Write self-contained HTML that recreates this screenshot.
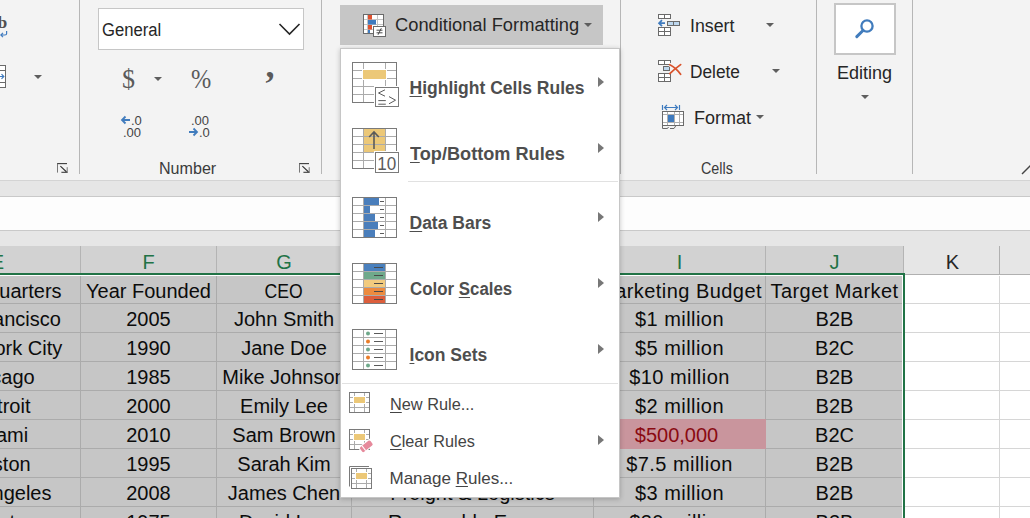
<!DOCTYPE html>
<html>
<head>
<meta charset="utf-8">
<style>
html,body{margin:0;padding:0;}
body{width:1030px;height:518px;overflow:hidden;position:relative;background:#f3f3f3;font-family:"Liberation Sans",sans-serif;color:#262626;}
.abs{position:absolute;}
.t{position:absolute;white-space:pre;line-height:1;transform-origin:0 0;}
/* ribbon */
#ribbon{left:0;top:0;width:1030px;height:180px;background:#f3f3f3;}
.vsep{position:absolute;top:0;width:1px;height:174px;background:#b6b6b6;}
.grp{font-size:16.5px;color:#3b3b3b;}
.rb{font-size:18px;color:#262626;}
.dd{position:absolute;width:0;height:0;border-left:4px solid transparent;border-right:4px solid transparent;border-top:4px solid #5e5e5e;}
/* bands */
#band1{left:0;top:180px;width:1030px;height:16px;background:#e6e6e6;border-top:1px solid #d4d4d4;box-sizing:border-box;}
#fbar{left:0;top:196px;width:1030px;height:35px;background:#fdfdfd;border-top:1px solid #c9c9c9;border-bottom:1px solid #c9c9c9;box-sizing:border-box;}
#band2{left:0;top:231px;width:1030px;height:15px;background:#e6e6e6;}
/* grid */
#grid{left:0;top:246px;width:1030px;height:272px;background:#fff;z-index:0;overflow:hidden;}
.ch{position:absolute;top:0;height:27px;background:#d2d2d2;color:#217346;font-size:20px;text-align:center;line-height:32px;border-right:1px solid #b4b4b4;box-sizing:border-box;}
.ch.u{background:#e6e6e6;color:#262626;border-right:1px solid #b0b0b0;border-bottom:1px solid #b0b0b0;}
.c{position:absolute;height:29px;background:#c6c6c6;border-right:1px solid #ababab;border-bottom:1px solid #ababab;box-sizing:border-box;font-size:20px;line-height:31px;text-align:center;color:#0c0c0c;white-space:pre;overflow:hidden;}
.c.w{background:#fff;border-color:#d6d6d6;}
/* menu */
#menu{z-index:5;left:340px;top:48px;width:280px;height:450px;background:#fff;border:1px solid #c6c6c6;box-sizing:border-box;box-shadow:0 1px 5px rgba(0,0,0,0.22);}
.mi{font-size:17.5px;font-weight:bold;color:#4e4e4e;white-space:pre;line-height:1;}
.ms{font-size:17px;color:#444;white-space:pre;line-height:1;}
.arr{position:absolute;width:0;height:0;border-top:5px solid transparent;border-bottom:5px solid transparent;border-left:6px solid #777;}
.hr{position:absolute;height:1px;background:#e1e1e1;}
u{text-decoration:underline;text-underline-offset:2px;text-decoration-thickness:1px;}
</style>
</head>
<body>
<div id="ribbon" class="abs">
  <div class="vsep" style="left:79px"></div>
  <div class="vsep" style="left:321px"></div>
  <div class="vsep" style="left:620px"></div>
  <div class="vsep" style="left:816px"></div>
  <div class="vsep" style="left:912px"></div>
  <!-- number group -->
  <div class="abs" style="left:98px;top:8px;width:206px;height:42px;box-sizing:border-box;border:1px solid #c6c6c6;background:#fff;"></div>
  <div class="t rb" id="tGeneral" style="left:101.5px;top:21px;font-size:18px;transform:scaleX(0.925);">General</div>
  <svg class="abs" style="left:278px;top:20px" width="24" height="18"><path d="M1.5 4 L11.5 14 L21.5 4" fill="none" stroke="#262626" stroke-width="1.6"/></svg>
  <div class="t" id="tDollar" style="left:121.5px;top:65px;font-size:28px;transform:scaleX(0.93);color:#5a5a5a;font-family:'Liberation Serif',serif;">$</div>
  <div class="dd" style="left:154px;top:77px"></div>
  <div class="t" id="tPct" style="left:191px;top:66px;font-size:27px;color:#5a5a5a;font-family:'Liberation Serif',serif;transform:scaleX(0.9);">%</div>
  <div class="t" id="tComma" style="left:265.5px;top:47px;font-size:36px;font-weight:bold;color:#5a5a5a;font-family:'Liberation Serif',serif;">,</div>
  <div class="t" id="tDec1a" style="left:131px;top:114px;font-size:13px;color:#444;">.0</div>
  <div class="t" id="tDec1b" style="left:123px;top:126px;font-size:13px;color:#444;">.00</div>
  <div class="t" id="tDec2a" style="left:191px;top:114px;font-size:13px;color:#444;">.00</div>
  <div class="t" id="tDec2b" style="left:199px;top:126px;font-size:13px;color:#444;">.0</div>
  <svg class="abs" style="left:120px;top:115px" width="12" height="10"><path d="M10 5 H2 M5.5 1.5 L2 5 L5.5 8.5" fill="none" stroke="#417cbd" stroke-width="1.8"/></svg>
  <svg class="abs" style="left:188px;top:127px" width="12" height="10"><path d="M1 5 H9 M5.5 1.5 L9 5 L5.5 8.5" fill="none" stroke="#417cbd" stroke-width="1.8"/></svg>
  <div class="t grp" id="tNumber" style="left:159px;top:160px;transform:scaleX(0.975);">Number</div>
  <!-- launchers -->
  <svg class="abs" style="left:56.7px;top:163px" width="12" height="12"><path d="M0 0.6 H10" stroke="#3a3a3a" stroke-width="1.1"/><path d="M0.5 0.6 V9.6" stroke="#777" stroke-width="1"/><path d="M3.4 3.2 L9.6 9.0" stroke="#2e2e2e" stroke-width="1.1"/><path d="M4.4 9.3 H10.6" stroke="#3a3a3a" stroke-width="1.1"/><path d="M10.2 4.2 V9.6" stroke="#777" stroke-width="1"/></svg>
  <svg class="abs" style="left:298.7px;top:163px" width="12" height="12"><path d="M0 0.6 H10" stroke="#3a3a3a" stroke-width="1.1"/><path d="M0.5 0.6 V9.6" stroke="#777" stroke-width="1"/><path d="M3.4 3.2 L9.6 9.0" stroke="#2e2e2e" stroke-width="1.1"/><path d="M4.4 9.3 H10.6" stroke="#3a3a3a" stroke-width="1.1"/><path d="M10.2 4.2 V9.6" stroke="#777" stroke-width="1"/></svg>
  <!-- left partial group -->
  <div class="t" id="tb" style="left:-2.5px;top:14px;font-size:17.5px;font-weight:bold;color:#505050;font-family:'Liberation Serif',serif;">b</div>
  <div class="dd" style="left:34px;top:75px"></div>
  <!-- conditional formatting button -->
  <div class="abs" style="left:340px;top:5px;width:263px;height:40px;background:#c6c6c6;"></div>
  <div class="t rb" id="tCF" style="left:395px;top:16px;font-size:18px;transform:scaleX(1.017);">Conditional Formatting</div>
  <div class="dd" style="left:584px;top:23px;border-left-width:4px;border-right-width:4px;border-top-width:4px;"></div>
<svg class="abs" style="left:360px;top:10px" width="30" height="30" viewBox="360 10 30 30">
<rect x="363.5" y="14.5" width="20" height="19" fill="#fff"/>
<path d="M364 19.5 H383 M364 24.5 H383 M364 29.5 H383 M367.5 15 V33 M377.5 15 V33" stroke="#c4c4c4" stroke-width="1" fill="none"/>
<rect x="368" y="15" width="4" height="4.5" fill="#e0512f"/><rect x="368" y="20" width="8" height="4.5" fill="#3f7bbf"/><rect x="368" y="25" width="4" height="4.5" fill="#e0512f"/><rect x="368" y="30" width="2" height="3" fill="#3f7bbf"/>
<rect x="363.5" y="14.5" width="20" height="19" fill="none" stroke="#6a6a6a"/>
<rect x="373.5" y="26.5" width="12" height="10" fill="#fff" stroke="#6a6a6a"/>
<path d="M376.5 30.2 H382.5 M376.5 32.8 H382.5 M381.3 28.2 L378 34.8" stroke="#3a3a3a" stroke-width="0.9" fill="none"/>
</svg>
<svg class="abs" style="left:655px;top:10px" width="30" height="30" viewBox="655 10 30 30">
<rect x="658.5" y="14.5" width="12" height="4" fill="#fff" stroke="#6a6a6a"/><path d="M664.5 14.5 V18.5" stroke="#6a6a6a"/>
<rect x="667.5" y="21.5" width="12" height="4" fill="#bdd7ee" stroke="#6a6a6a"/><path d="M673.5 21.5 V25.5" stroke="#6a6a6a"/>
<rect x="658.5" y="27.5" width="12" height="8" fill="#fff" stroke="#6a6a6a"/><path d="M664.5 27.5 V35.5 M658.5 31.5 H670.5" stroke="#6a6a6a"/>
<path d="M665 23.2 H659.2 M662 20.2 L659 23.2 L662 26.2" fill="none" stroke="#3f7bbf" stroke-width="1.7"/>
</svg>
<svg class="abs" style="left:655px;top:56px" width="30" height="30" viewBox="655 56 30 30">
<rect x="658.5" y="60.5" width="12" height="4" fill="#fff" stroke="#6a6a6a"/><path d="M664.5 60.5 V64.5" stroke="#6a6a6a"/>
<rect x="663.5" y="66.5" width="6" height="4" fill="#bdd7ee" stroke="#6a6a6a"/>
<rect x="658.5" y="73.5" width="12" height="8" fill="#fff" stroke="#6a6a6a"/><path d="M664.5 73.5 V81.5 M658.5 77.5 H670.5" stroke="#6a6a6a"/>
<path d="M669.5 64.5 Q675 67 680.5 74.5" stroke="#f3f3f3" stroke-width="4" fill="none"/>
<path d="M669.8 64.8 Q675.5 67.5 680.6 74.3" stroke="#d9532c" stroke-width="1.8" fill="none" stroke-linecap="round"/>
<path d="M669.8 73.6 Q674 69.5 680.6 64.6" stroke="#d9532c" stroke-width="1.8" fill="none" stroke-linecap="round"/>
</svg>
<svg class="abs" style="left:658px;top:102px" width="30" height="30" viewBox="658 102 30 30">
<path d="M662.5 105 V110 M679.5 105 V110 M664.5 107.5 H677.5 M667 105 L664.5 107.5 L667 110 M675 105 L677.5 107.5 L675 110" stroke="#3f7bbf" stroke-width="1.2" fill="none"/>
<rect x="662.5" y="111.5" width="21" height="14" fill="#fff"/>
<path d="M667.5 112 V125 M674.5 112 V125 M679.5 112 V125 M663 114.5 H683 M663 122.5 H683" stroke="#b0b0b0" fill="none"/>
<rect x="668" y="115" width="6" height="7" fill="#3f7bbf"/>
<path d="M662.5 125.5 V128.5 H667.5 L668.5 127 M670 128.5 H674 L676 125.5" stroke="#6a6a6a" fill="none"/>
<rect x="662.5" y="111.5" width="21" height="14" fill="none" stroke="#6a6a6a"/>
</svg>
<svg class="abs" style="left:0px;top:28px" width="12" height="62" viewBox="0 28 12 62">
<path d="M6.6 31 V33.8 Q6.6 35 5 35 H1 M3 32.8 L0.8 35 L3 37.2" stroke="#3f7bbf" stroke-width="1.2" fill="none"/>
<rect x="-4.5" y="65.5" width="10" height="22" fill="#fff" stroke="#6a6a6a"/>
<path d="M-4 70.5 H5 M-4 82.5 H5" stroke="#6a6a6a" fill="none"/>
<path d="M-2 76.5 H3.5 M1.5 74.2 L3.8 76.5 L1.5 78.8" stroke="#3f7bbf" stroke-width="1.2" fill="none"/>
</svg>
  <!-- cells group -->
  <div class="t rb" id="tInsert" style="left:690px;top:17px;transform:scaleX(0.985);">Insert</div>
  <div class="dd" style="left:765.5px;top:23px"></div>
  <div class="t rb" id="tDelete" style="left:690px;top:63px;transform:scaleX(0.96);">Delete</div>
  <div class="dd" style="left:771.5px;top:69px"></div>
  <div class="t rb" id="tFormat" style="left:694px;top:108.7px;">Format</div>
  <div class="dd" style="left:756px;top:115px"></div>
  <div class="t grp" id="tCells" style="left:701px;top:160px;transform:scaleX(0.87);">Cells</div>
  <!-- editing -->
  <div class="abs" style="left:834px;top:3px;width:62px;height:52px;box-sizing:border-box;border:2px solid #c6c6c6;background:#fff;"></div>
  <svg class="abs" style="left:853px;top:17px" width="24" height="24"><circle cx="14" cy="9" r="5.6" fill="none" stroke="#417cbd" stroke-width="2.3"/><path d="M10 13.5 L3.8 19.6" stroke="#417cbd" stroke-width="3" stroke-linecap="round"/></svg>
  <div class="t rb" id="tEditing" style="left:837px;top:64px;">Editing</div>
  <div class="dd" style="left:861px;top:94.5px"></div>
  <svg class="abs" style="left:1020px;top:163px" width="12" height="14"><path d="M2 11 L12 1" fill="none" stroke="#444" stroke-width="1.4"/></svg>
</div>
<div id="band1" class="abs"></div>
<div id="fbar" class="abs"></div>
<div id="band2" class="abs"></div>
<div id="grid" class="abs">
<div class="ch" style="left:-80px;width:161px;height:27px;padding-right:5px;">E</div>
<div class="c" style="left:-80px;top:30px;width:161px;height:28px;"><span style="position:relative;left:1px">Headquarters</span></div>
<div class="c" style="left:-80px;top:58px;width:161px;height:29px;"><span style="position:relative;left:-3px">San Francisco</span></div>
<div class="c" style="left:-80px;top:87px;width:161px;height:29px;"><span style="position:relative;left:0px">New York City</span></div>
<div class="c" style="left:-80px;top:116px;width:161px;height:29px;"><span style="position:relative;left:-2px">Chicago</span></div>
<div class="c" style="left:-80px;top:145px;width:161px;height:29px;"><span style="position:relative;left:1px">Detroit</span></div>
<div class="c" style="left:-80px;top:174px;width:161px;height:29px;"><span style="position:relative;left:1.5px">Miami</span></div>
<div class="c" style="left:-80px;top:203px;width:161px;height:29px;"><span style="position:relative;left:-0.5px">Boston</span></div>
<div class="c" style="left:-80px;top:232px;width:161px;height:29px;"><span style="position:relative;left:-3px">Los Angeles</span></div>
<div class="c" style="left:-80px;top:261px;width:161px;height:29px;"><span style="position:relative;left:0px">Houston</span></div>
<div class="ch" style="left:81px;width:136px;height:27px;">F</div>
<div class="c" style="left:81px;top:30px;width:136px;height:28px;">Year Founded</div>
<div class="c" style="left:81px;top:58px;width:136px;height:29px;">2005</div>
<div class="c" style="left:81px;top:87px;width:136px;height:29px;">1990</div>
<div class="c" style="left:81px;top:116px;width:136px;height:29px;">1985</div>
<div class="c" style="left:81px;top:145px;width:136px;height:29px;">2000</div>
<div class="c" style="left:81px;top:174px;width:136px;height:29px;">2010</div>
<div class="c" style="left:81px;top:203px;width:136px;height:29px;">1995</div>
<div class="c" style="left:81px;top:232px;width:136px;height:29px;">2008</div>
<div class="c" style="left:81px;top:261px;width:136px;height:29px;">1975</div>
<div class="ch" style="left:217px;width:135px;height:27px;">G</div>
<div class="c" style="left:217px;top:30px;width:135px;height:28px;"><span style="display:inline-block;transform:scaleX(0.88)">CEO</span></div>
<div class="c" style="left:217px;top:58px;width:135px;height:29px;">John Smith</div>
<div class="c" style="left:217px;top:87px;width:135px;height:29px;">Jane Doe</div>
<div class="c" style="left:217px;top:116px;width:135px;height:29px;">Mike Johnson</div>
<div class="c" style="left:217px;top:145px;width:135px;height:29px;">Emily Lee</div>
<div class="c" style="left:217px;top:174px;width:135px;height:29px;">Sam Brown</div>
<div class="c" style="left:217px;top:203px;width:135px;height:29px;">Sarah Kim</div>
<div class="c" style="left:217px;top:232px;width:135px;height:29px;">James Chen</div>
<div class="c" style="left:217px;top:261px;width:135px;height:29px;">David Lee</div>
<div class="ch" style="left:352px;width:242px;height:27px;">H</div>
<div class="c" style="left:352px;top:30px;width:242px;height:28px;">Industry</div>
<div class="c" style="left:352px;top:58px;width:242px;height:29px;">Software</div>
<div class="c" style="left:352px;top:87px;width:242px;height:29px;">Finance</div>
<div class="c" style="left:352px;top:116px;width:242px;height:29px;">Manufacturing</div>
<div class="c" style="left:352px;top:145px;width:242px;height:29px;">Automotive</div>
<div class="c" style="left:352px;top:174px;width:242px;height:29px;">Hospitality</div>
<div class="c" style="left:352px;top:203px;width:242px;height:29px;">Healthcare</div>
<div class="c" style="left:352px;top:232px;width:242px;height:29px;">Freight &amp; Logistics</div>
<div class="c" style="left:352px;top:261px;width:242px;height:29px;">Renewable Energy</div>
<div class="ch" style="left:594px;width:172px;height:27px;">I</div>
<div class="c" style="left:594px;top:30px;width:172px;height:28px;letter-spacing:0.45px;"><span style="position:relative;left:0.5px">Marketing Budget</span></div>
<div class="c" style="left:594px;top:58px;width:172px;height:29px;letter-spacing:0.45px;">$1 million</div>
<div class="c" style="left:594px;top:87px;width:172px;height:29px;letter-spacing:0.45px;">$5 million</div>
<div class="c" style="left:594px;top:116px;width:172px;height:29px;letter-spacing:0.45px;">$10 million</div>
<div class="c" style="left:594px;top:145px;width:172px;height:29px;letter-spacing:0.45px;">$2 million</div>
<div class="c" style="left:594px;top:174px;width:172px;height:29px;background:#c9959d;color:#8a0a12;border-color:#c9959d;margin-top:-1px;height:30px;line-height:33px;z-index:2;"><span style="position:relative;left:-3px">$500,000</span></div>
<div class="c" style="left:594px;top:203px;width:172px;height:29px;letter-spacing:0.45px;">$7.5 million</div>
<div class="c" style="left:594px;top:232px;width:172px;height:29px;letter-spacing:0.45px;">$3 million</div>
<div class="c" style="left:594px;top:261px;width:172px;height:29px;letter-spacing:0.45px;">$20 million</div>
<div class="ch" style="left:766px;width:138px;height:27px;">J</div>
<div class="c" style="left:766px;top:30px;width:138px;height:28px;letter-spacing:0.45px;">Target Market</div>
<div class="c" style="left:766px;top:58px;width:138px;height:29px;">B2B</div>
<div class="c" style="left:766px;top:87px;width:138px;height:29px;">B2C</div>
<div class="c" style="left:766px;top:116px;width:138px;height:29px;">B2B</div>
<div class="c" style="left:766px;top:145px;width:138px;height:29px;">B2B</div>
<div class="c" style="left:766px;top:174px;width:138px;height:29px;">B2C</div>
<div class="c" style="left:766px;top:203px;width:138px;height:29px;">B2B</div>
<div class="c" style="left:766px;top:232px;width:138px;height:29px;">B2B</div>
<div class="c" style="left:766px;top:261px;width:138px;height:29px;">B2B</div>
<div class="ch u" style="left:904px;width:96px;height:29px;padding-left:2px;">K</div>
<div class="c w" style="left:904px;top:30px;width:96px;height:28px;"></div>
<div class="c w" style="left:904px;top:58px;width:96px;height:29px;"></div>
<div class="c w" style="left:904px;top:87px;width:96px;height:29px;"></div>
<div class="c w" style="left:904px;top:116px;width:96px;height:29px;"></div>
<div class="c w" style="left:904px;top:145px;width:96px;height:29px;"></div>
<div class="c w" style="left:904px;top:174px;width:96px;height:29px;"></div>
<div class="c w" style="left:904px;top:203px;width:96px;height:29px;"></div>
<div class="c w" style="left:904px;top:232px;width:96px;height:29px;"></div>
<div class="c w" style="left:904px;top:261px;width:96px;height:29px;"></div>
<div class="ch u" style="left:1000px;width:41px;height:29px;"></div>
<div class="c w" style="left:1000px;top:30px;width:41px;height:28px;"></div>
<div class="c w" style="left:1000px;top:58px;width:41px;height:29px;"></div>
<div class="c w" style="left:1000px;top:87px;width:41px;height:29px;"></div>
<div class="c w" style="left:1000px;top:116px;width:41px;height:29px;"></div>
<div class="c w" style="left:1000px;top:145px;width:41px;height:29px;"></div>
<div class="c w" style="left:1000px;top:174px;width:41px;height:29px;"></div>
<div class="c w" style="left:1000px;top:203px;width:41px;height:29px;"></div>
<div class="c w" style="left:1000px;top:232px;width:41px;height:29px;"></div>
<div class="c w" style="left:1000px;top:261px;width:41px;height:29px;"></div>
<div class="abs" style="left:0;top:27px;width:905px;height:2px;background:#217346"></div>
<div class="abs" style="left:0;top:29px;width:903px;height:1px;background:#fff"></div>
<div class="abs" style="left:903px;top:27px;width:2px;height:250px;background:#217346"></div>
<div class="abs" style="left:902px;top:29px;width:1px;height:250px;background:#fff"></div>
</div>
<div id="menu" class="abs"></div>
<div id="mitems" class="abs" style="left:0;top:0;z-index:6">
<svg class="abs" style="left:350px;top:60px" width="52" height="50" viewBox="-2 -2 52 50"><rect x="0.5" y="0.5" width="44" height="40" fill="#fff"/><path d="M1 8.5 H44" stroke="#ababab" stroke-width="1"/><path d="M1 16.5 H44" stroke="#ababab" stroke-width="1"/><path d="M1 24.5 H44" stroke="#ababab" stroke-width="1"/><path d="M1 32.5 H44" stroke="#ababab" stroke-width="1"/><path d="M11.5 1 V40" stroke="#ababab" stroke-width="1"/><path d="M33.5 1 V40" stroke="#ababab" stroke-width="1"/><rect x="0.5" y="0.5" width="44" height="40" fill="none" stroke="#7a7a7a" stroke-width="1"/><rect x="10" y="7" width="25" height="11" fill="#fff"/><rect x="11" y="8" width="23" height="9" fill="#ecc878"/><rect x="22" y="24" width="26" height="22" fill="#fff"/><rect x="23.5" y="25.5" width="23" height="19" fill="#fff" stroke="#7a7a7a"/><path d="M33 27.8 L26.5 31 L33 34.2 M26.3 38.6 H33.8 M26.3 42.2 H33.8 M37 34.6 L43.5 38.2 L37 41.8" fill="none" stroke="#5a5a5a" stroke-width="1"/></svg>
<svg class="abs" style="left:350px;top:126px" width="52" height="50" viewBox="-2 -2 52 50"><rect x="0.5" y="0.5" width="44" height="40" fill="#fff"/><rect x="11" y="0" width="23" height="24" fill="#ecc878"/><path d="M1 8.5 H44" stroke="#ababab" stroke-width="1"/><path d="M1 16.5 H44" stroke="#ababab" stroke-width="1"/><path d="M1 24.5 H44" stroke="#ababab" stroke-width="1"/><path d="M1 32.5 H44" stroke="#ababab" stroke-width="1"/><path d="M11.5 1 V40" stroke="#ababab" stroke-width="1"/><path d="M33.5 1 V40" stroke="#ababab" stroke-width="1"/><rect x="0.5" y="0.5" width="44" height="40" fill="none" stroke="#7a7a7a" stroke-width="1"/><path d="M22 4 V21 M17.2 9 L22 4 L26.8 9" fill="none" stroke="#5a5a5a" stroke-width="1.6"/><rect x="22" y="23" width="26" height="23" fill="#fff"/><rect x="23.5" y="24.5" width="23" height="20" fill="#fff" stroke="#7a7a7a"/><text x="25.3" y="41.5" font-family="Liberation Sans" font-size="17.5" fill="#5a5a5a" textLength="19" lengthAdjust="spacingAndGlyphs">10</text></svg>
<svg class="abs" style="left:350px;top:195px" width="52" height="50" viewBox="-2 -2 52 50"><rect x="0.5" y="0.5" width="44" height="40" fill="#fff"/><rect x="12" y="1" width="15" height="7.5" fill="#4a7ebb"/><rect x="12" y="9" width="6" height="7.5" fill="#4a7ebb"/><rect x="12" y="17" width="11" height="7.5" fill="#4a7ebb"/><rect x="12" y="25" width="14" height="7.5" fill="#4a7ebb"/><rect x="12" y="33" width="11" height="7.5" fill="#4a7ebb"/><path d="M1 8.5 H44" stroke="#ababab" stroke-width="1"/><path d="M1 16.5 H44" stroke="#ababab" stroke-width="1"/><path d="M1 24.5 H44" stroke="#ababab" stroke-width="1"/><path d="M1 32.5 H44" stroke="#ababab" stroke-width="1"/><path d="M11.5 1 V40" stroke="#ababab" stroke-width="1"/><path d="M33.5 1 V40" stroke="#ababab" stroke-width="1"/><rect x="0.5" y="0.5" width="44" height="40" fill="none" stroke="#7a7a7a" stroke-width="1"/><path d="M28 4.5 H32" stroke="#5a5a5a" stroke-width="1"/><path d="M28 12.5 H32" stroke="#5a5a5a" stroke-width="1"/><path d="M28 20.5 H32" stroke="#5a5a5a" stroke-width="1"/><path d="M28 28.5 H32" stroke="#5a5a5a" stroke-width="1"/><path d="M28 36.5 H32" stroke="#5a5a5a" stroke-width="1"/></svg>
<svg class="abs" style="left:350px;top:261px" width="52" height="50" viewBox="-2 -2 52 50"><rect x="0.5" y="0.5" width="44" height="40" fill="#fff"/><rect x="12" y="1" width="21" height="7.5" fill="#4a80bd"/><rect x="12" y="9" width="21" height="7.5" fill="#6fa98b"/><rect x="12" y="17" width="21" height="7.5" fill="#f2cb7e"/><rect x="12" y="25" width="21" height="7.5" fill="#ec8b3f"/><rect x="12" y="33" width="21" height="7.5" fill="#dc5e3c"/><path d="M1 8.5 H44" stroke="#ababab" stroke-width="1"/><path d="M1 16.5 H44" stroke="#ababab" stroke-width="1"/><path d="M1 24.5 H44" stroke="#ababab" stroke-width="1"/><path d="M1 32.5 H44" stroke="#ababab" stroke-width="1"/><path d="M11.5 1 V40" stroke="#ababab" stroke-width="1"/><path d="M33.5 1 V40" stroke="#ababab" stroke-width="1"/><rect x="0.5" y="0.5" width="44" height="40" fill="none" stroke="#7a7a7a" stroke-width="1"/><path d="M22 4.5 H31" stroke="#4a4a4a" stroke-width="1"/><path d="M22 12.5 H31" stroke="#4a4a4a" stroke-width="1"/><path d="M22 20.5 H31" stroke="#4a4a4a" stroke-width="1"/><path d="M22 28.5 H31" stroke="#4a4a4a" stroke-width="1"/><path d="M22 36.5 H31" stroke="#4a4a4a" stroke-width="1"/></svg>
<svg class="abs" style="left:350px;top:327px" width="52" height="50" viewBox="-2 -2 52 50"><rect x="0.5" y="0.5" width="44" height="40" fill="#fff"/><path d="M1 8.5 H44" stroke="#ababab" stroke-width="1"/><path d="M1 16.5 H44" stroke="#ababab" stroke-width="1"/><path d="M1 24.5 H44" stroke="#ababab" stroke-width="1"/><path d="M1 32.5 H44" stroke="#ababab" stroke-width="1"/><path d="M11.5 1 V40" stroke="#ababab" stroke-width="1"/><path d="M33.5 1 V40" stroke="#ababab" stroke-width="1"/><rect x="0.5" y="0.5" width="44" height="40" fill="none" stroke="#7a7a7a" stroke-width="1"/><circle cx="16" cy="4.6" r="2" fill="#6fa98b"/><path d="M22 4.5 H31" stroke="#5a5a5a" stroke-width="1"/><circle cx="16" cy="12.6" r="2" fill="#ea7d2a"/><path d="M22 12.5 H31" stroke="#5a5a5a" stroke-width="1"/><circle cx="16" cy="20.6" r="2" fill="#6fa98b"/><path d="M22 20.5 H31" stroke="#5a5a5a" stroke-width="1"/><circle cx="16" cy="28.6" r="2" fill="#ea7d2a"/><path d="M22 28.5 H31" stroke="#5a5a5a" stroke-width="1"/><circle cx="16" cy="36.6" r="2" fill="#6fa98b"/><path d="M22 36.5 H31" stroke="#5a5a5a" stroke-width="1"/></svg>
<svg class="abs" style="left:346px;top:388px" width="30" height="30" viewBox="-3 -4 30 30"><rect x="0.5" y="0.5" width="20" height="20" fill="#fff"/><path d="M5.5 1 V20 M15.5 1 V20 M1 5.5 H20 M1 10.5 H20 M1 15.5 H20" stroke="#ababab" stroke-width="1" fill="none"/><rect x="4" y="4" width="13" height="8" fill="#fff"/><rect x="5" y="5" width="11" height="6" fill="#ecc878"/><rect x="0.5" y="0.5" width="20" height="20" fill="none" stroke="#7a7a7a" stroke-width="1"/></svg>
<svg class="abs" style="left:346px;top:425px" width="30" height="30" viewBox="-3 -4 30 30"><rect x="0.5" y="0.5" width="20" height="20" fill="#fff"/><path d="M5.5 1 V20 M15.5 1 V20 M1 5.5 H20 M1 10.5 H20 M1 15.5 H20" stroke="#ababab" stroke-width="1" fill="none"/><rect x="4" y="4" width="13" height="8" fill="#fff"/><rect x="5" y="5" width="11" height="6" fill="#ecc878"/><rect x="0.5" y="0.5" width="20" height="20" fill="none" stroke="#7a7a7a" stroke-width="1"/><g transform="translate(17.3,17.3) rotate(-38)"><rect x="-7.5" y="-4" width="15" height="8" fill="#fff"/><rect x="-6.5" y="-3" width="13" height="6" rx="1.5" fill="#e6899b"/><rect x="-3.6" y="-3" width="1" height="6" fill="#fff"/></g></svg>
<svg class="abs" style="left:348px;top:464px" width="30" height="30" viewBox="-3 -4 30 30"><path d="M-1.5 18.5 V-1.5 H18" fill="none" stroke="#7a7a7a" stroke-width="1"/><rect x="0.5" y="0.5" width="20" height="20" fill="#fff"/><path d="M5.5 1 V20 M15.5 1 V20 M1 5.5 H20 M1 10.5 H20 M1 15.5 H20" stroke="#ababab" stroke-width="1" fill="none"/><rect x="4" y="4" width="13" height="8" fill="#fff"/><rect x="5" y="5" width="11" height="6" fill="#ecc878"/><rect x="0.5" y="0.5" width="20" height="20" fill="none" stroke="#7a7a7a" stroke-width="1"/></svg>
<div class="t mi" id="mHi" style="left:409.5px;top:80px;"><u>H</u>ighlight Cells Rules</div>
<div class="arr" style="left:598px;top:77.0px"></div>
<div class="t mi" id="mTop" style="left:409.5px;top:145.5px;transform:scaleX(1.037)"><u>T</u>op/Bottom Rules</div>
<div class="arr" style="left:598px;top:143.0px"></div>
<div class="hr" style="left:408px;top:181px;width:210px"></div>
<div class="t mi" id="mData" style="left:409.5px;top:214.5px;"><u>D</u>ata Bars</div>
<div class="arr" style="left:598px;top:212.0px"></div>
<div class="t mi" id="mColor" style="left:409.5px;top:280.5px;transform:scaleX(0.964)">Color <u>S</u>cales</div>
<div class="arr" style="left:598px;top:278.0px"></div>
<div class="t mi" id="mIcon" style="left:409.5px;top:346.5px;"><u>I</u>con Sets</div>
<div class="arr" style="left:598px;top:344.0px"></div>
<div class="hr" style="left:342px;top:383px;width:276px"></div>
<div class="t ms" id="mNew" style="left:389.5px;top:396px;transform:scaleX(0.96)"><u>N</u>ew Rule...</div>
<div class="t ms" id="mClear" style="left:389.5px;top:433px;transform:scaleX(0.955)"><u>C</u>lear Rules</div>
<div class="arr" style="left:598px;top:435.0px"></div>
<div class="t ms" id="mManage" style="left:389.5px;top:470px;">Manage <u>R</u>ules...</div>
</div><!--/mitems-->
</body>
</html>
